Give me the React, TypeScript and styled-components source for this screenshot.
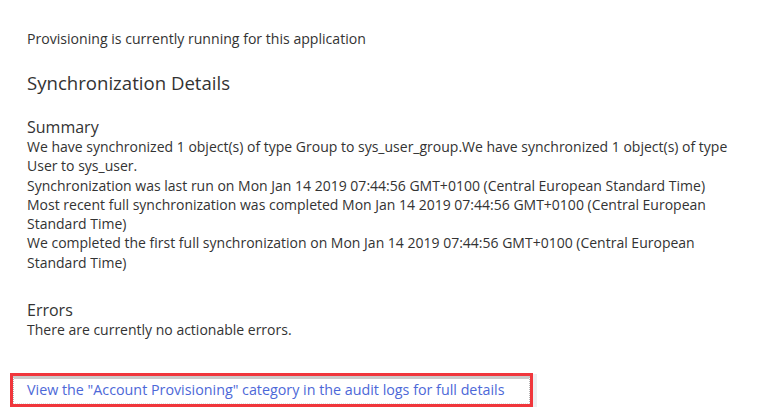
import React from 'react';
import styled, { createGlobalStyle } from 'styled-components';

const GlobalStyle = createGlobalStyle`
  html, body {
    margin: 0;
    padding: 0;
    background: #ffffff;
  }
  body {
    font-family: 'Open Sans', 'Noto Sans', 'Liberation Sans', sans-serif;
    color: #333333;
  }
`;

const Page = styled.div`
  width: 762px;
  height: 407px;
  box-sizing: border-box;
  padding: 29px 8px 0 27px;
  overflow: hidden;
`;

const Status = styled.p`
  margin: 0;
  font-size: 14.1px;
  line-height: 19px;
`;

const Heading = styled.h2`
  margin: 23px 0 0;
  font-size: 18.6px;
  font-weight: 400;
  line-height: 24px;
`;

const Section = styled.section<{ $gap: number }>`
  margin-top: ${({ $gap }) => $gap}px;
`;

const SectionTitle = styled.h3`
  margin: 0;
  font-size: 16px;
  font-weight: 400;
  line-height: 20px;
`;

const Line = styled.div`
  font-size: 14px;
  line-height: 19.3px;
`;

const LinkFrame = styled.div`
  display: inline-block;
  margin: 34px 0 0 -17px;
  border: 3px solid #f0363c;
  box-shadow: 4px 1px 0 #eceef1;
`;

const FocusBox = styled.a`
  display: block;
  width: 502px;
  height: 24px;
  padding: 0 0 0 13px;
  border-top: 3px solid #cbcbcb;
  border-left: 1px dotted #b5b5b5;
  border-right: 1px dotted #b5b5b5;
  border-bottom: 1px dotted #e2e2e2;
  font-size: 14.3px;
  line-height: 22px;
  color: #4d68d8;
  text-decoration: none;
  white-space: nowrap;
`;

const summary = [
  'We have synchronized 1 object(s) of type Group to sys_user_group.We have synchronized 1 object(s) of type User to sys_user.',
  'Synchronization was last run on Mon Jan 14 2019 07:44:56 GMT+0100 (Central European Standard Time)',
  'Most recent full synchronization was completed Mon Jan 14 2019 07:44:56 GMT+0100 (Central European Standard Time)',
  'We completed the first full synchronization on Mon Jan 14 2019 07:44:56 GMT+0100 (Central European Standard Time)',
];

const App: React.FC = () => {
  return (
    <>
      <GlobalStyle />
      <Page>
        <Status>Provisioning is currently running for this application</Status>
        <Heading>Synchronization Details</Heading>

        <Section $gap={22}>
          <SectionTitle>Summary</SectionTitle>
          {summary.map((text, index) => (
            <Line key={index}>{text}</Line>
          ))}
        </Section>

        <Section $gap={28}>
          <SectionTitle>Errors</SectionTitle>
          <Line>There are currently no actionable errors.</Line>
        </Section>

        <LinkFrame>
          <FocusBox href="#">
            View the "Account Provisioning" category in the audit logs for full details
          </FocusBox>
        </LinkFrame>
      </Page>
    </>
  );
};

export default App;
